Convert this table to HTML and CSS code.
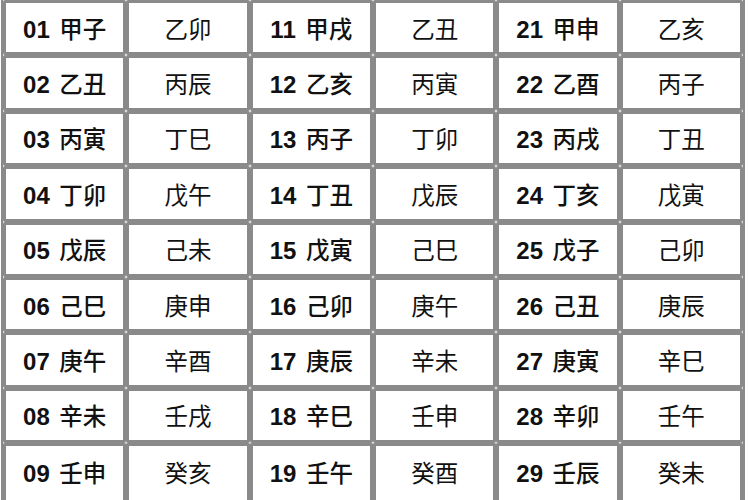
FILE: index.html
```html
<!DOCTYPE html>
<html lang="zh">
<head>
<meta charset="utf-8">
<link rel="stylesheet" href="styles.css">
</head>
<body>
<table class="grid">
<tr><td class="b"><span class="n">01</span> 甲子</td><td>乙卯</td><td class="b"><span class="n">11</span> 甲戌</td><td>乙丑</td><td class="b"><span class="n">21</span> 甲申</td><td>乙亥</td></tr>
<tr><td class="b"><span class="n">02</span> 乙丑</td><td>丙辰</td><td class="b"><span class="n">12</span> 乙亥</td><td>丙寅</td><td class="b"><span class="n">22</span> 乙酉</td><td>丙子</td></tr>
<tr><td class="b"><span class="n">03</span> 丙寅</td><td>丁巳</td><td class="b"><span class="n">13</span> 丙子</td><td>丁卯</td><td class="b"><span class="n">23</span> 丙戌</td><td>丁丑</td></tr>
<tr><td class="b"><span class="n">04</span> 丁卯</td><td>戊午</td><td class="b"><span class="n">14</span> 丁丑</td><td>戊辰</td><td class="b"><span class="n">24</span> 丁亥</td><td>戊寅</td></tr>
<tr><td class="b"><span class="n">05</span> 戊辰</td><td>己未</td><td class="b"><span class="n">15</span> 戊寅</td><td>己巳</td><td class="b"><span class="n">25</span> 戊子</td><td>己卯</td></tr>
<tr><td class="b"><span class="n">06</span> 己巳</td><td>庚申</td><td class="b"><span class="n">16</span> 己卯</td><td>庚午</td><td class="b"><span class="n">26</span> 己丑</td><td>庚辰</td></tr>
<tr><td class="b"><span class="n">07</span> 庚午</td><td>辛酉</td><td class="b"><span class="n">17</span> 庚辰</td><td>辛未</td><td class="b"><span class="n">27</span> 庚寅</td><td>辛巳</td></tr>
<tr><td class="b"><span class="n">08</span> 辛未</td><td>壬戌</td><td class="b"><span class="n">18</span> 辛巳</td><td>壬申</td><td class="b"><span class="n">28</span> 辛卯</td><td>壬午</td></tr>
<tr class="last"><td class="b"><span class="n">09</span> 壬申</td><td>癸亥</td><td class="b"><span class="n">19</span> 壬午</td><td>癸酉</td><td class="b"><span class="n">29</span> 壬辰</td><td>癸未</td></tr>
</table>
</body>
</html>
```
FILE: styles.css
```css
html, body {
  margin: 0;
  padding: 0;
  background: #ffffff;
  overflow: hidden;
  height: 500px;
}

.grid {
  margin: -2px 0 0 1px;
  width: 744px;
  table-layout: fixed;
  border-collapse: separate;
  border-spacing: 0;
  border: 2px solid #8a8a8a;
  border-bottom: 0;
  background: #ffffff;
  font-family: "Liberation Sans", "Noto Sans CJK SC", sans-serif;
  font-size: 23.5px;
  color: #111111;
}

.grid td {
  box-sizing: border-box;
  height: 55.4px;
  padding: 0;
  border: 3px solid #8a8a8a;
  border-radius: 2px;
  text-align: center;
  vertical-align: middle;
  font-weight: normal;
}

.grid td.b {
  font-weight: 500;
  word-spacing: 3px;
}

.grid td.b .n {
  font-weight: bold;
  font-size: 24px;
}

.grid .last td {
  height: 64px;
  padding-bottom: 9px;
  border-bottom: 0;
}
```
